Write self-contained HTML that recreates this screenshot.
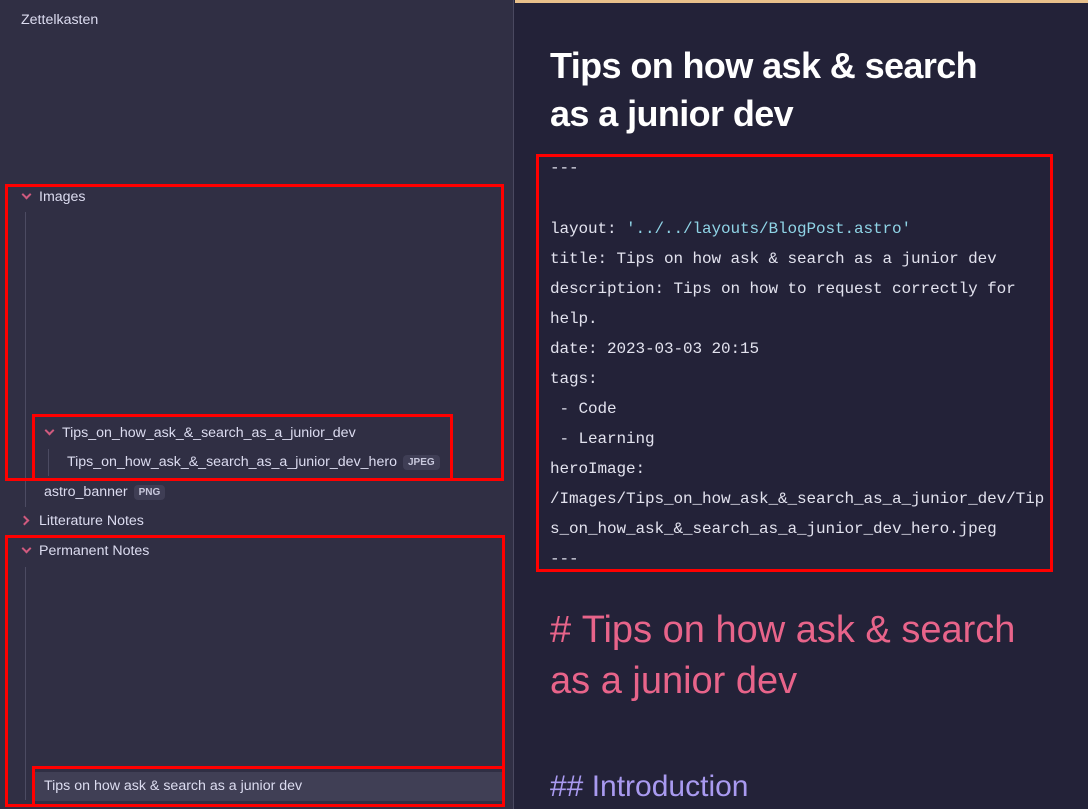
<!DOCTYPE html>
<html><head><meta charset="utf-8"><style>
*{margin:0;padding:0;box-sizing:border-box}
body{width:1088px;height:809px;overflow:hidden;position:relative;background:#232238;font-family:"Liberation Sans",sans-serif}
#side{position:absolute;left:0;top:0;width:514px;height:809px;background:#302f44;border-right:1px solid #4a4960}
.t{position:absolute;color:#dcdcf0;font-size:14.2px;white-space:nowrap;line-height:18px}
.red{position:absolute;border:3px solid #ff0000}
.vl{position:absolute;width:1px;background:#4c4b62}
.badge{display:inline-block;background:#3f3e55;color:#c8c8dc;font-size:10px;font-weight:bold;padding:1px 5px;border-radius:4px;margin-left:6px;vertical-align:1px;line-height:13px}
.chev{position:absolute;width:7px;height:7px;border-right:2px solid #d05a7e;border-bottom:2px solid #d05a7e}
.code{position:absolute;left:550px;font-family:"Liberation Mono",monospace;font-size:16px;letter-spacing:-0.1px;color:#e2e2ee;white-space:pre;line-height:30px}
</style></head><body>
<div id="side">
<div class="t" style="left:21px;top:11px">Zettelkasten</div>
<div class="chev" style="left:23px;top:191px;transform:rotate(45deg)"></div>
<div class="t" style="left:39px;top:188px">Images</div>
<div class="vl" style="left:25px;top:212px;height:295px"></div>
<div class="chev" style="left:46px;top:427px;transform:rotate(45deg)"></div>
<div class="t" style="left:62px;top:424px">Tips_on_how_ask_&amp;_search_as_a_junior_dev</div>
<div class="vl" style="left:48px;top:449px;height:27px"></div>
<div class="t" style="left:67px;top:453px">Tips_on_how_ask_&amp;_search_as_a_junior_dev_hero<span class="badge">JPEG</span></div>
<div class="t" style="left:44px;top:483px">astro_banner<span class="badge">PNG</span></div>
<div class="chev" style="left:21px;top:517px;transform:rotate(-45deg)"></div>
<div class="t" style="left:39px;top:512px">Litterature Notes</div>
<div class="chev" style="left:23px;top:545px;transform:rotate(45deg)"></div>
<div class="t" style="left:39px;top:542px">Permanent Notes</div>
<div class="vl" style="left:25px;top:567px;height:233px"></div>
<div style="position:absolute;left:35px;top:772px;width:467px;height:29px;background:#403f55"></div>
<div class="t" style="left:44px;top:777px">Tips on how ask &amp; search as a junior dev</div>
<div class="red" style="left:5px;top:184px;width:499px;height:297px"></div>
<div class="red" style="left:32px;top:414px;width:421px;height:67px"></div>
<div class="red" style="left:5px;top:535px;width:500px;height:272px"></div>
<div class="red" style="left:32px;top:766px;width:473px;height:41px"></div>
</div>
<div style="position:absolute;left:515px;top:0;width:573px;height:3px;background:#e8c08a"></div>
<div style="position:absolute;left:550px;top:42px;color:#fff;font-weight:bold;font-size:36px;letter-spacing:-0.6px;line-height:48px;width:470px">Tips on how ask &amp; search as a junior dev</div>
<div class="code" style="top:153px">---</div>
<div class="code" style="top:214px">layout: <span style="color:#8fd4e6">'../../layouts/BlogPost.astro'</span>
title: Tips on how ask &amp; search as a junior dev
description: Tips on how to request correctly for
help.
date: 2023-03-03 20:15
tags:
 - Code
 - Learning
heroImage:
/Images/Tips_on_how_ask_&amp;_search_as_a_junior_dev/Tip
s_on_how_ask_&amp;_search_as_a_junior_dev_hero.jpeg
---</div>
<div class="red" style="left:536px;top:154px;width:517px;height:418px"></div>
<div style="position:absolute;left:550px;top:605px;color:#e8648a;font-size:38px;line-height:51px;width:500px">#&nbsp;Tips on how ask &amp; search as a junior dev</div>
<div style="position:absolute;left:550px;top:767px;color:#a99af0;font-size:30px;line-height:40px">## Introduction</div>
</body></html>
